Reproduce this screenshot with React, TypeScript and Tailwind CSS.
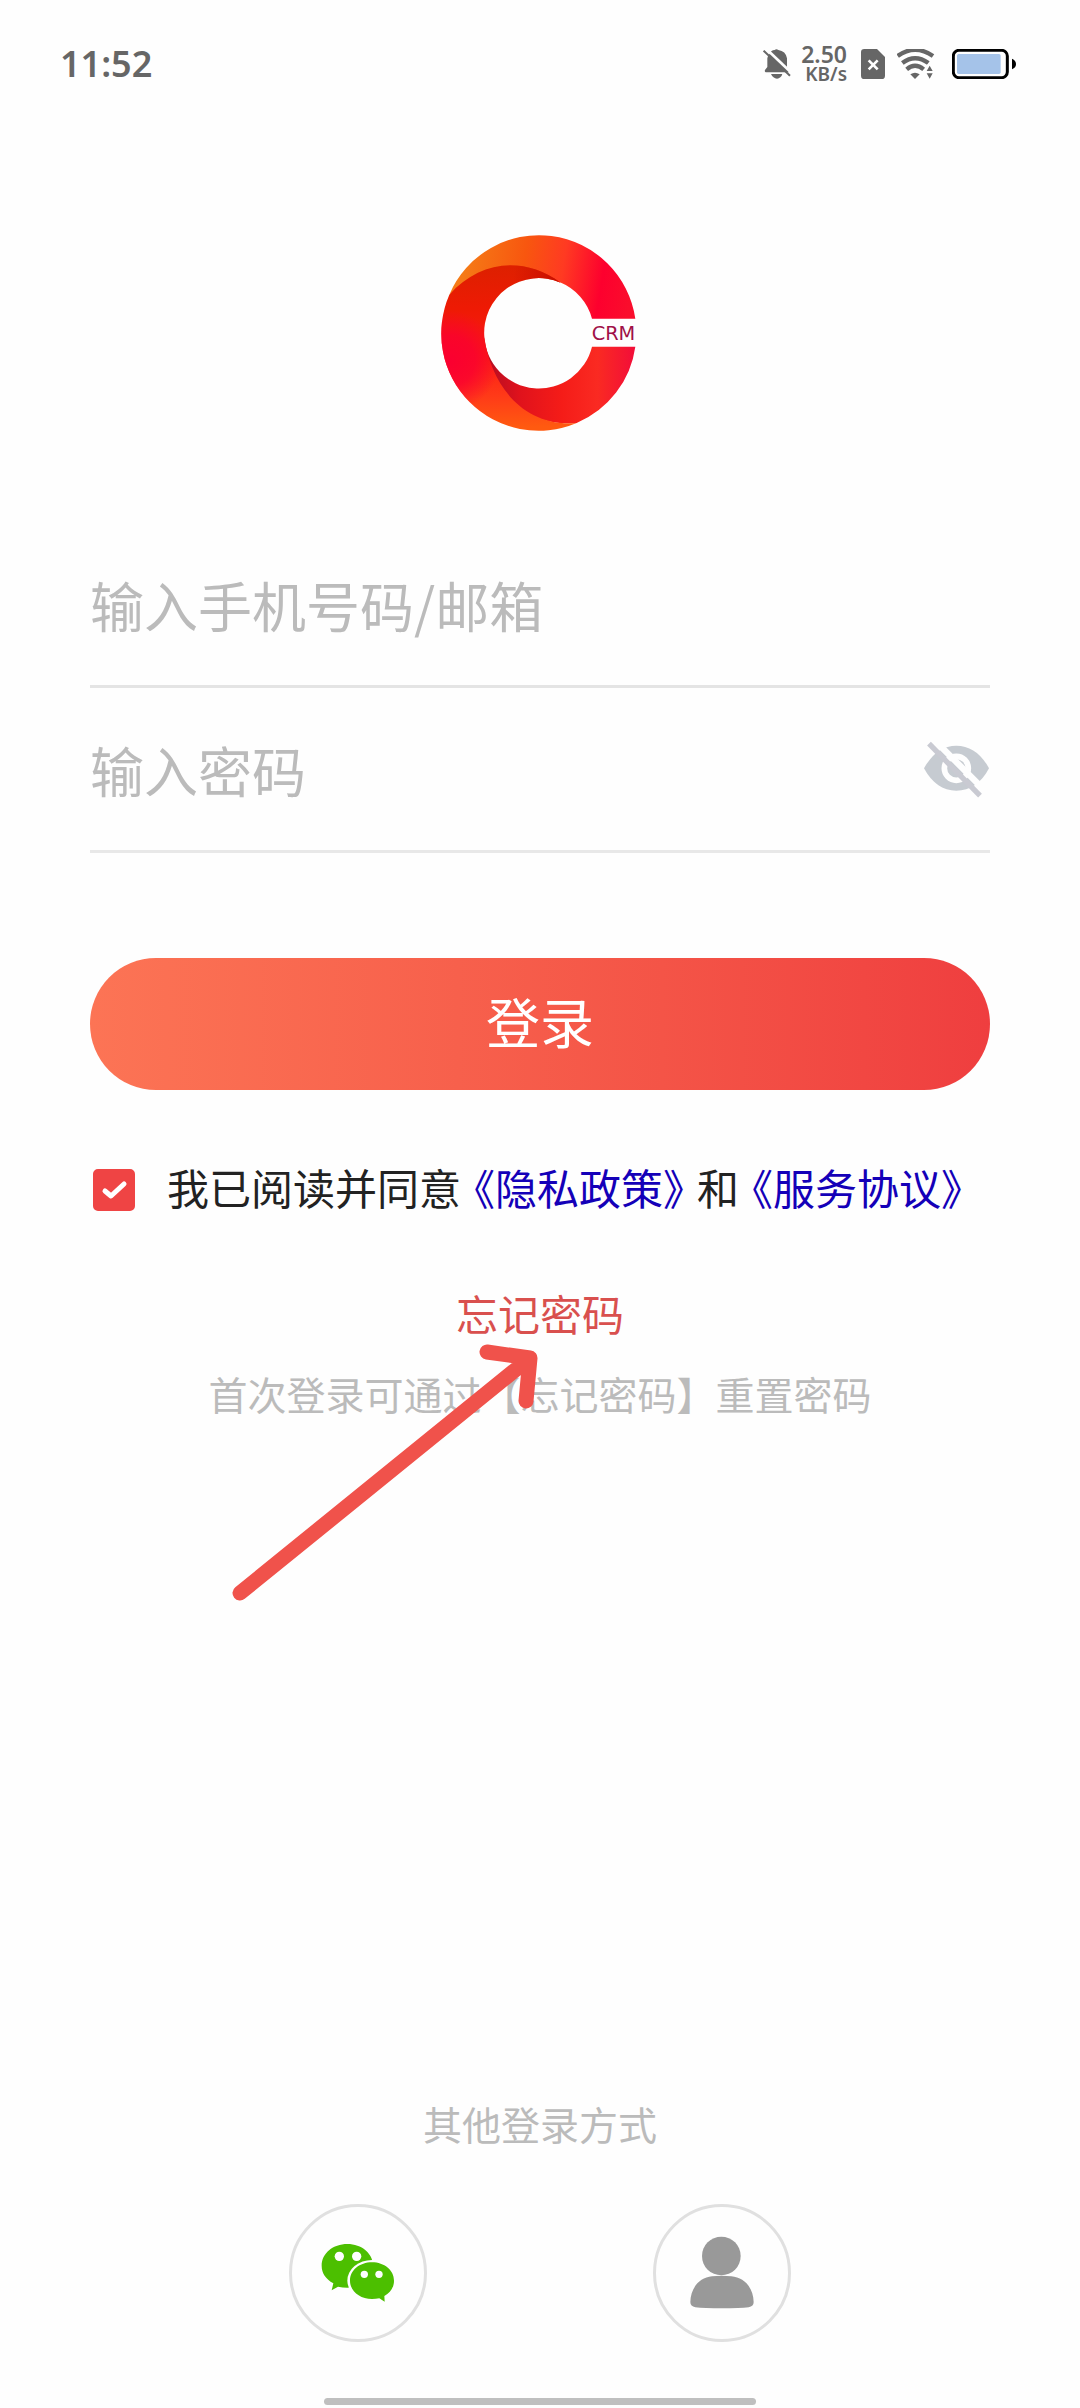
import { useState } from 'react'

const links = {
  privacy: '《隐私政策》',
  terms: '《服务协议》',
}

function StatusBar() {
  return (
    <header className="flex items-center justify-between h-32 pl-[60px] pr-16 text-[#666]">
      <span className="text-[36px] leading-10 font-semibold">11:52</span>
      <div className="flex items-center">
        <svg className="w-[28px] h-[30px]" viewBox="0 0 84 90">
          <path d="M20 14Q24 4 35 3Q40 -1 46 3Q68 6 72 28V54L78 70H8Q4 68 6 63L13 54V28Q14 20 20 14Z" fill="currentColor" />
          <path d="M24 75H58Q54 88 42 89Q30 88 24 75Z" fill="currentColor" />
          <path d="M6 -4L88 74" stroke="#fefefe" strokeWidth="8" />
          <path d="M2 5L81 80" stroke="currentColor" strokeWidth="6" />
        </svg>
        <div className="flex flex-col items-end ml-2.5 font-semibold">
          <span className="text-[23px] leading-5">2.50</span>
          <span className="text-[19px] leading-5">KB/s</span>
        </div>
        <svg className="w-[24px] h-[30px] ml-3.5" viewBox="0 0 72 90">
          <path d="M10 0H48L72 24V80Q72 90 62 90H10Q0 90 0 80V10Q0 0 10 0Z" fill="currentColor" />
          <path d="M23 34L50 61M50 34L23 61" stroke="#fefefe" strokeWidth="8" />
        </svg>
        <svg className="w-[38px] h-[30px] ml-3" viewBox="0 0 114 90" fill="none">
          <path d="M2 21Q54 -16 108 21" stroke="currentColor" strokeWidth="13" />
          <path d="M16 42Q54 13 94 42" stroke="currentColor" strokeWidth="13" />
          <path d="M29 61Q54 40 80 61" stroke="currentColor" strokeWidth="13" />
          <path d="M40 76Q54 66 68 76L54 90Z" fill="currentColor" />
          <path d="M84 90V52L98 42L114 52V90Z" fill="#fefefe" />
          <path d="M89 66L98 50L107 66ZM89 73L98 89L107 73Z" fill="currentColor" />
        </svg>
        <svg className="w-[64px] h-[30px] ml-[17px]" viewBox="0 0 192 90">
          <rect x="4" y="4" width="162" height="82" rx="17" fill="none" stroke="#000" strokeWidth="9" />
          <rect x="15" y="15" width="131" height="60" rx="5" fill="#a5c3e9" />
          <path d="M180 29Q192 34 192 45Q192 56 180 61Z" fill="#000" />
        </svg>
      </div>
    </header>
  )
}

function Logo() {
  return (
    <svg className="w-[220px] h-[220px] mx-auto mt-24" viewBox="0 0 660 660" role="img" aria-label="CRM">
      <defs>
        <linearGradient id="top" gradientUnits="userSpaceOnUse" x1="100" y1="140" x2="600" y2="220">
          <stop offset="0" stopColor="#f57a16" />
          <stop offset="0.35" stopColor="#f8560f" />
          <stop offset="0.58" stopColor="#ff3a22" />
          <stop offset="0.82" stopColor="#fd002e" />
          <stop offset="1" stopColor="#fa0d2c" />
        </linearGradient>
        <linearGradient id="left" gradientUnits="userSpaceOnUse" x1="250" y1="130" x2="260" y2="610">
          <stop offset="0" stopColor="#de2000" />
          <stop offset="0.25" stopColor="#ee1a04" />
          <stop offset="0.55" stopColor="#fb1a14" />
          <stop offset="0.8" stopColor="#ff3a18" />
          <stop offset="1" stopColor="#ff5a10" />
        </linearGradient>
        <radialGradient id="edge" gradientUnits="userSpaceOnUse" cx="60" cy="410" r="150">
          <stop offset="0" stopColor="#fa0030" />
          <stop offset="0.5" stopColor="#fa0030" stopOpacity="0.8" />
          <stop offset="1" stopColor="#fa0030" stopOpacity="0" />
        </radialGradient>
        <radialGradient id="shade" gradientUnits="userSpaceOnUse" cx="380" cy="160" r="130">
          <stop offset="0" stopColor="#c80f00" />
          <stop offset="1" stopColor="#c80f00" stopOpacity="0" />
        </radialGradient>
        <linearGradient id="bottom" gradientUnits="userSpaceOnUse" x1="170" y1="430" x2="620" y2="430">
          <stop offset="0" stopColor="#b50d22" />
          <stop offset="0.22" stopColor="#e0121c" />
          <stop offset="0.5" stopColor="#f51c18" />
          <stop offset="0.74" stopColor="#fa2a22" />
          <stop offset="1" stopColor="#f20c3a" />
        </linearGradient>
      </defs>
      <path d="M58 212A292 292 0 0 1 616 284H486A164 164 0 0 0 390 175Q200 90 58 212Z" fill="url(#top)" />
      <path d="M163 340A164 164 0 0 0 486 368H616A292 292 0 0 1 440 597C260 610 150 470 163 340Z" fill="url(#bottom)" />
      <path d="M58 212C150 110 280 95 392 176A164 164 0 0 0 163 340C180 470 270 610 440 597A292 292 0 0 1 58 212Z" fill="url(#left)" />
      <path d="M58 212C150 110 280 95 392 176A164 164 0 0 0 163 340C180 470 270 610 440 597A292 292 0 0 1 58 212Z" fill="url(#edge)" />
      <path d="M58 212C150 110 280 95 392 176A164 164 0 0 0 163 340C180 470 270 610 440 597A292 292 0 0 1 58 212Z" fill="url(#shade)" />
      <text x="485" y="347" fontSize="58" fill="#a01048" className="font-['DejaVu_Sans']">CRM</text>
    </svg>
  )
}

function EyeOff() {
  return (
    <svg className="w-[66px] h-[60px]" viewBox="0 0 198 180">
      <path d="M0 88C24 44 56 20 97 20S172 44 195 88C172 132 138 155 97 155S24 132 0 88Z" fill="#c6cbd1" />
      <circle cx="97" cy="88" r="36" fill="none" stroke="#fefefe" strokeWidth="17" />
      <path d="M30 2L186 158" stroke="#fefefe" strokeWidth="19" />
      <path d="M15 14L168 170" stroke="#c9cad2" strokeWidth="16" />
    </svg>
  )
}

function WechatIcon() {
  return (
    <svg className="w-[74px] h-[60px]" viewBox="0 0 222 180">
      <path d="M79 3C36 3 2 31 2 68C2 90 14 108 37 121L32 142L51 131C60 133 70 134 79 134C122 134 156 105 156 68S122 3 79 3Z" fill="#4cbf00" />
      <ellipse cx="153" cy="113" rx="74" ry="62" fill="#fefefe" />
      <path d="M153 58C116 58 87 82 87 113S116 168 153 168C161 168 168 167 175 166L191 176L190 159C208 149 219 133 219 113C219 82 190 58 153 58Z" fill="#4cbf00" />
      <g fill="#fefefe">
        <circle cx="55" cy="40" r="14" />
        <circle cx="107" cy="40" r="14" />
        <circle cx="130" cy="94" r="11" />
        <circle cx="174" cy="94" r="11" />
      </g>
    </svg>
  )
}

function UserIcon() {
  return (
    <svg className="w-[64px] h-[74px]" viewBox="0 0 192 222" fill="#999">
      <circle cx="94" cy="60" r="58" />
      <path d="M66 121Q95 117 124 121C162 124 190 154 191 198Q191 211 176 214Q150 217 96 217Q42 217 16 214Q1 211 1 198C2 154 30 124 66 121Z" />
    </svg>
  )
}

export default function App() {
  const [agreed, setAgreed] = useState(true)
  const [visible, setVisible] = useState(false)

  return (
    <div className="min-h-screen flex flex-col bg-[#fefefe] font-['Noto_Sans','Noto_Sans_CJK_SC',sans-serif]">
      <StatusBar />
      <Logo />

      <main className="px-[90px] mt-[79px] font-['Noto_Sans_CJK_SC',sans-serif]">
        <form onSubmit={(e) => e.preventDefault()}>
          <div className="flex items-center h-[165px] border-b-[3px] border-[#e4e4e4]">
            <input
              type="text"
              aria-label="输入手机号码/邮箱"
              placeholder="输入手机号码/邮箱"
              className="flex-1 min-w-0 h-20 text-[54px] text-[#222] placeholder:text-[#bbb] outline-none"
            />
          </div>
          <div className="flex items-center h-[165px] border-b-[3px] border-[#e8e8e8]">
            <input
              type={visible ? 'text' : 'password'}
              aria-label="输入密码"
              placeholder="输入密码"
              className="flex-1 min-w-0 h-20 text-[54px] text-[#222] placeholder:text-[#bbb] outline-none"
            />
            <button type="button" aria-label="显示密码" onClick={() => setVisible(!visible)}>
              <EyeOff />
            </button>
          </div>

          <button
            type="submit"
            className="w-full h-[132px] mt-[105px] pb-1.5 rounded-full bg-linear-to-r from-[#fc7455] to-[#ef3e3f] text-white text-[54px] leading-[60px]"
          >
            登录
          </button>

          <div className="flex items-center h-[60px] mt-[70px] pl-[3px]">
            <div className="relative w-[42px] h-[42px]">
              <input
                id="agree"
                type="checkbox"
                checked={agreed}
                onChange={(e) => setAgreed(e.target.checked)}
                className="block w-full h-full appearance-none rounded-[5px] border-2 border-[#ef4444] checked:bg-[#ef4444]"
              />
              {agreed && (
                <svg className="absolute inset-0 pointer-events-none" viewBox="0 0 42 42" fill="none">
                  <path d="M12 22L18 27L31 15" stroke="#fff" strokeWidth="5" strokeLinecap="round" strokeLinejoin="round" />
                </svg>
              )}
            </div>
            <label htmlFor="agree" className="ml-8 pb-1.5 text-[42px] leading-[60px] text-[#222] whitespace-nowrap">
              我已阅读并同意
              <a href="#privacy" className="-mx-2 text-[#1400b8]">{links.privacy}</a>
              和
              <a href="#terms" className="-mx-2 text-[#1400b8]">{links.terms}</a>
            </label>
          </div>
        </form>

        <div className="relative mt-[63px] text-center">
          <a href="#forgot" className="block w-fit mx-auto text-[42px] leading-[60px] text-[#d9504e]">忘记密码</a>
          <p className="mt-5 text-[39px] leading-[60px] text-[#bbb]">首次登录可通过【忘记密码】重置密码</p>
          {/* hand-drawn pointer up to the reset link */}
          <svg className="absolute left-1/2 top-14 -ml-[310px] w-[310px] h-[270px]" viewBox="0 0 310 270" fill="none">
            <path d="M10 254L300 19M257 13L300 19L296 62" stroke="#f0524b" strokeWidth="15" strokeLinecap="round" strokeLinejoin="round" />
          </svg>
        </div>
      </main>

      <footer className="mt-auto flex flex-col items-center pb-[3px] font-['Noto_Sans_CJK_SC',sans-serif]">
        <p className="text-[39px] leading-[60px] text-[#bbb]">其他登录方式</p>
        <div className="flex gap-[226px] mt-[51px]">
          <button type="button" aria-label="微信登录" className="flex items-center justify-center w-[138px] h-[138px] rounded-full border-[3px] border-[#e0e0e0]">
            <WechatIcon />
          </button>
          <button type="button" aria-label="账号登录" className="flex items-center justify-center w-[138px] h-[138px] rounded-full border-[3px] border-[#e0e0e0]">
            <UserIcon />
          </button>
        </div>
        <div className="w-2/5 h-[7px] mt-14 rounded-full bg-[#bfbfbf]" />
      </footer>
    </div>
  )
}
